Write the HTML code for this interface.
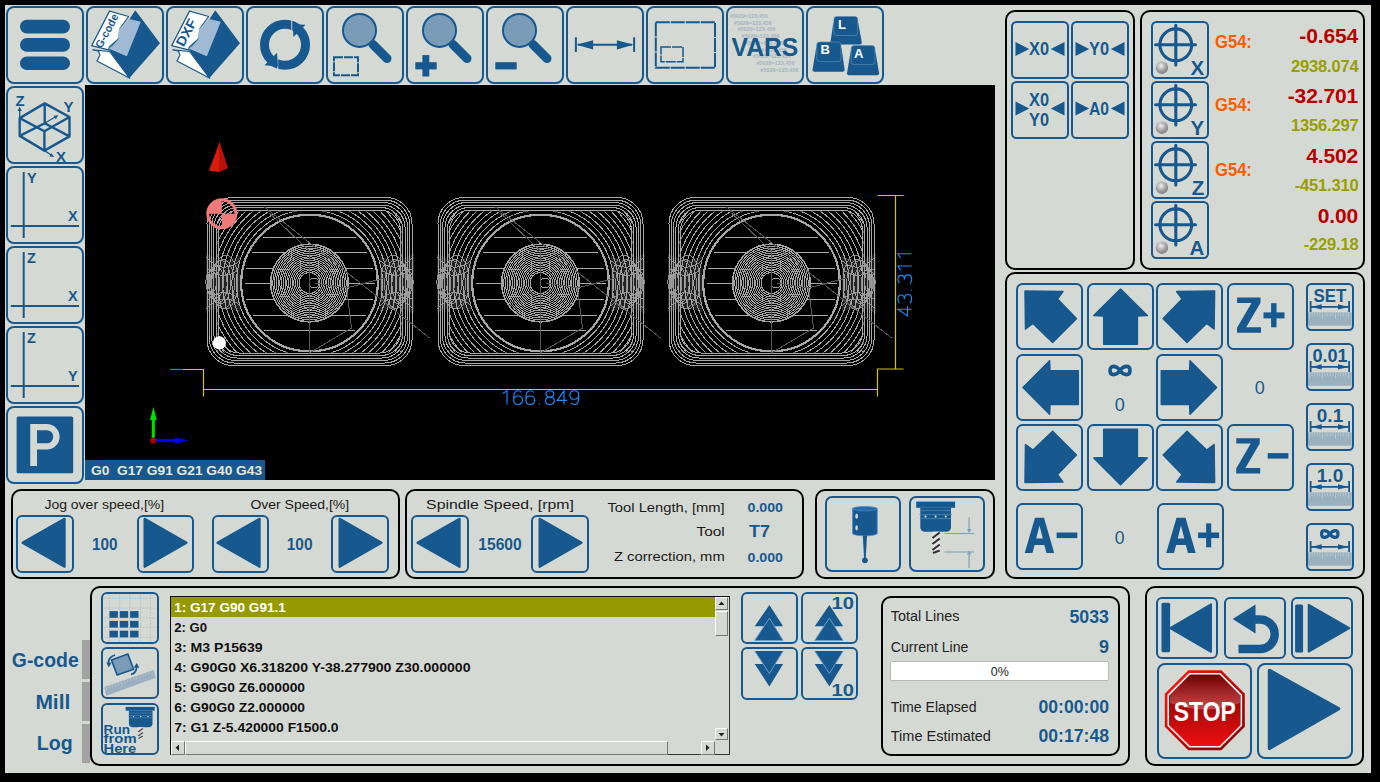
<!DOCTYPE html>
<html><head><meta charset="utf-8">
<style>
html,body{margin:0;padding:0;width:1380px;height:782px;overflow:hidden;background:#000}
body{position:relative;font-family:"Liberation Sans",sans-serif}
.b{position:absolute;box-sizing:border-box;border-style:solid;border-color:#17598e}
.p{position:absolute;box-sizing:border-box;border-style:solid;border-color:#000}
.t{position:absolute;white-space:nowrap;line-height:1}
svg{overflow:visible}
</style></head><body>
<div style="position:absolute;left:0;top:0;width:1380px;height:782px;background:#000"></div>
<div style="position:absolute;left:5px;top:5px;width:1366px;height:768px;background:#d5d9d3"></div>
<div class="b" style="left:6px;top:6px;width:77.6px;height:77.6px;border-radius:8px;border-width:2px;"></div>
<div class="b" style="left:86px;top:6px;width:77.6px;height:77.6px;border-radius:8px;border-width:2px;"></div>
<div class="b" style="left:166px;top:6px;width:77.6px;height:77.6px;border-radius:8px;border-width:2px;"></div>
<div class="b" style="left:246px;top:6px;width:77.6px;height:77.6px;border-radius:8px;border-width:2px;"></div>
<div class="b" style="left:326px;top:6px;width:77.6px;height:77.6px;border-radius:8px;border-width:2px;"></div>
<div class="b" style="left:406px;top:6px;width:77.6px;height:77.6px;border-radius:8px;border-width:2px;"></div>
<div class="b" style="left:486px;top:6px;width:77.6px;height:77.6px;border-radius:8px;border-width:2px;"></div>
<div class="b" style="left:566px;top:6px;width:77.6px;height:77.6px;border-radius:8px;border-width:2px;"></div>
<div class="b" style="left:646px;top:6px;width:77.6px;height:77.6px;border-radius:8px;border-width:2px;"></div>
<div class="b" style="left:726px;top:6px;width:77.6px;height:77.6px;border-radius:8px;border-width:2px;"></div>
<div class="b" style="left:806px;top:6px;width:77.6px;height:77.6px;border-radius:8px;border-width:2px;"></div>
<svg style="position:absolute;left:6px;top:6px;" width="78" height="78" viewBox="0 0 78 78"><rect x="14" y="13.8" width="50" height="13.7" rx="6.85" fill="#17598e"/><rect x="14" y="32.1" width="50" height="13.7" rx="6.85" fill="#17598e"/><rect x="14" y="50.4" width="50" height="13.7" rx="6.85" fill="#17598e"/></svg>
<svg style="position:absolute;left:86px;top:6px;" width="78" height="78" viewBox="0 0 78 78"><path d="M49.3,4.2 L74,37.2 L43.2,72.3 L23,44 Z" fill="#17598e"/><path d="M6.9,43.8 L12.3,45 L14,49 L11,55 L43.8,72.3 L23.5,45.5 Z" fill="#fff" stroke="#17598e" stroke-width="1.2" stroke-linejoin="round"/><path d="M5.7,39.6 L23.5,5.1 L42.6,10.5 L33.6,23 L33,32.5 L23.5,40.8 L22.4,43.8 Z" fill="#fff" stroke="#17598e" stroke-width="1.2" stroke-linejoin="round"/><path d="M43.2,12.9 L54.8,15.8 L40.8,50.3 L23.5,42.9 L32.5,33 L33,23 Z" fill="#9fbad2"/><text x="15.5" y="43" transform="rotate(-62 15.5 43)" font-family="Liberation Sans" font-weight="bold" font-size="11" fill="#17598e" textLength="37" lengthAdjust="spacingAndGlyphs">G-code</text></svg>
<svg style="position:absolute;left:166px;top:6px;" width="78" height="78" viewBox="0 0 78 78"><path d="M49.3,4.2 L74,37.2 L43.2,72.3 L23,44 Z" fill="#17598e"/><path d="M6.9,43.8 L12.3,45 L14,49 L11,55 L43.8,72.3 L23.5,45.5 Z" fill="#fff" stroke="#17598e" stroke-width="1.2" stroke-linejoin="round"/><path d="M5.7,39.6 L23.5,5.1 L42.6,10.5 L33.6,23 L33,32.5 L23.5,40.8 L22.4,43.8 Z" fill="#fff" stroke="#17598e" stroke-width="1.2" stroke-linejoin="round"/><path d="M43.2,12.9 L54.8,15.8 L40.8,50.3 L23.5,42.9 L32.5,33 L33,23 Z" fill="#9fbad2"/><text x="17.5" y="41.5" transform="rotate(-62 17.5 41.5)" font-family="Liberation Sans" font-weight="bold" font-size="13.5" fill="#17598e" textLength="29" lengthAdjust="spacingAndGlyphs">DXF</text></svg>
<svg style="position:absolute;left:246px;top:6px;" width="78" height="78" viewBox="0 0 78 78"><circle cx="39" cy="38.8" r="20.5" fill="none" stroke="#17598e" stroke-width="9"/><path d="M45.3,12 L46.3,12 L46.3,31 L45.3,31 Z M31.2,46 L32.2,46 L32.2,65 L31.2,65 Z" fill="#d5d9d3"/><path d="M46.5,18.3 L59.5,18.8 L47.5,31 Z" fill="#17598e"/><path d="M18.5,59.2 L31,46.8 L32,60.5 Z" fill="#17598e"/></svg>
<svg style="position:absolute;left:326px;top:6px;" width="78" height="78" viewBox="0 0 78 78"><line x1="47" y1="38.5" x2="61" y2="52.5" stroke="#17598e" stroke-width="9" stroke-linecap="round"/><circle cx="33.5" cy="24.4" r="16.5" fill="#7a9cb8" stroke="#17598e" stroke-width="2"/><rect x="8" y="51.2" width="24" height="18" fill="none" stroke="#17598e" stroke-width="2" stroke-dasharray="9 1"/></svg>
<svg style="position:absolute;left:406px;top:6px;" width="78" height="78" viewBox="0 0 78 78"><line x1="47" y1="38.5" x2="61" y2="52.5" stroke="#17598e" stroke-width="9" stroke-linecap="round"/><circle cx="33.5" cy="24.4" r="16.5" fill="#7a9cb8" stroke="#17598e" stroke-width="2"/><rect x="9.3" y="56.2" width="21.4" height="7.2" fill="#17598e"/><rect x="16.4" y="49.1" width="6.9" height="21.4" fill="#17598e"/></svg>
<svg style="position:absolute;left:486px;top:6px;" width="78" height="78" viewBox="0 0 78 78"><line x1="47" y1="38.5" x2="61" y2="52.5" stroke="#17598e" stroke-width="9" stroke-linecap="round"/><circle cx="33.5" cy="24.4" r="16.5" fill="#7a9cb8" stroke="#17598e" stroke-width="2"/><rect x="9.3" y="56.2" width="21.4" height="7.2" fill="#17598e"/></svg>
<svg style="position:absolute;left:566px;top:6px;" width="78" height="78" viewBox="0 0 78 78"><line x1="9.9" y1="31.3" x2="9.9" y2="46" stroke="#17598e" stroke-width="2"/><line x1="68.1" y1="31.3" x2="68.1" y2="46" stroke="#17598e" stroke-width="2"/><line x1="12" y1="38.8" x2="66" y2="38.8" stroke="#17598e" stroke-width="2"/><path d="M10.5,38.8 L27.1,34.2 L27.1,43.4 Z M67.5,38.8 L50.9,34.2 L50.9,43.4 Z" fill="#17598e"/></svg>
<svg style="position:absolute;left:646px;top:6px;" width="78" height="78" viewBox="0 0 78 78"><rect x="9.8" y="16.2" width="59.2" height="45.5" fill="none" stroke="#17598e" stroke-width="2" stroke-dasharray="14 1"/><rect x="15" y="41" width="22" height="14.7" fill="none" stroke="#17598e" stroke-width="1.5" stroke-dasharray="10 1"/></svg>
<svg style="position:absolute;left:726px;top:6px;" width="78" height="78" viewBox="0 0 78 78"><text x="3.9" y="11.90" font-family="Liberation Sans" font-weight="bold" font-size="5.2" fill="#a3b3c2" textLength="38" lengthAdjust="spacingAndGlyphs">#5029=123,456</text><text x="7.7" y="18.63" font-family="Liberation Sans" font-weight="bold" font-size="5.2" fill="#a3b3c2" textLength="38" lengthAdjust="spacingAndGlyphs">#5029=123,456</text><text x="11.5" y="25.36" font-family="Liberation Sans" font-weight="bold" font-size="5.2" fill="#a3b3c2" textLength="38" lengthAdjust="spacingAndGlyphs">#5029=123,456</text><text x="15.3" y="32.09" font-family="Liberation Sans" font-weight="bold" font-size="5.2" fill="#a3b3c2" textLength="38" lengthAdjust="spacingAndGlyphs">#5029=123,456</text><text x="19.1" y="38.82" font-family="Liberation Sans" font-weight="bold" font-size="5.2" fill="#a3b3c2" textLength="38" lengthAdjust="spacingAndGlyphs">#5029=123,456</text><text x="22.9" y="45.55" font-family="Liberation Sans" font-weight="bold" font-size="5.2" fill="#a3b3c2" textLength="38" lengthAdjust="spacingAndGlyphs">#5029=123,456</text><text x="26.7" y="52.28" font-family="Liberation Sans" font-weight="bold" font-size="5.2" fill="#a3b3c2" textLength="38" lengthAdjust="spacingAndGlyphs">#5029=123,456</text><text x="30.5" y="59.01" font-family="Liberation Sans" font-weight="bold" font-size="5.2" fill="#a3b3c2" textLength="38" lengthAdjust="spacingAndGlyphs">#5029=123,456</text><text x="34.3" y="65.74" font-family="Liberation Sans" font-weight="bold" font-size="5.2" fill="#a3b3c2" textLength="38" lengthAdjust="spacingAndGlyphs">#5029=123,456</text><text x="5.5" y="50.3" font-family="Liberation Sans" font-weight="bold" font-size="25" fill="#17598e" textLength="66.8" lengthAdjust="spacingAndGlyphs">VARS</text></svg>
<svg style="position:absolute;left:806px;top:6px;" width="78" height="78" viewBox="0 0 78 78"><path d="M24.4,36.4 L27.4,16.5 L52.2,16.5 L55.8,36.4 Q55.8,38.4 52.8,38.4 L27.4,38.4 Q24.4,38.4 24.4,36.4 Z" fill="#17598e"/><rect x="27.9" y="10.5" width="23.800000000000004" height="19.0" rx="3" fill="#17598e" stroke="#5f8ab0" stroke-width="0.7"/><text x="32" y="23" font-family="Liberation Sans" font-weight="bold" font-size="13" fill="#fff">L</text><path d="M6.5,63.7 L10.2,42 L35.5,42 L38.6,63.7 Q38.6,65.7 35.6,65.7 L9.5,65.7 Q6.5,65.7 6.5,63.7 Z" fill="#17598e"/><rect x="10.7" y="36" width="24.3" height="19.6" rx="3" fill="#17598e" stroke="#5f8ab0" stroke-width="0.7"/><text x="14.5" y="48" font-family="Liberation Sans" font-weight="bold" font-size="13" fill="#fff">B</text><path d="M41,67.3 L44.7,45.6 L69.4,45.6 L73.1,67.3 Q73.1,69.3 70.1,69.3 L44,69.3 Q41,69.3 41,67.3 Z" fill="#17598e"/><rect x="45.2" y="39.6" width="23.700000000000003" height="19.0" rx="3" fill="#17598e" stroke="#5f8ab0" stroke-width="0.7"/><text x="48" y="52" font-family="Liberation Sans" font-weight="bold" font-size="13" fill="#fff">A</text></svg>
<div class="b" style="left:6px;top:86.2px;width:77.6px;height:77.6px;border-radius:8px;border-width:2px;"></div>
<div class="b" style="left:6px;top:166.2px;width:77.6px;height:77.6px;border-radius:8px;border-width:2px;"></div>
<div class="b" style="left:6px;top:246.2px;width:77.6px;height:77.6px;border-radius:8px;border-width:2px;"></div>
<div class="b" style="left:6px;top:326.2px;width:77.6px;height:77.6px;border-radius:8px;border-width:2px;"></div>
<div class="b" style="left:6px;top:406.2px;width:77.6px;height:77.6px;border-radius:8px;border-width:2px;"></div>
<svg style="position:absolute;left:6px;top:86px;" width="78" height="78" viewBox="0 0 78 78"><path d="M13.7,32.1 L38.7,17.4 L63.5,31 L38.4,45.2 Z M13.7,49.9 L38.7,37.3 L63.5,50.4 L38.4,64.6 Z M13.7,32.1 V49.9 M38.7,17.4 V37.3 M63.5,31 V50.4 M38.4,45.2 V64.6" stroke="#17598e" stroke-width="2.4" fill="none" stroke-linejoin="round"/><path d="M13.7,32 V23" stroke="#17598e" stroke-width="1.3"/><path d="M13.7,20.5 L11.6,25 L15.8,25 Z" fill="#17598e"/><path d="M38.7,37.3 L50,30.5" stroke="#17598e" stroke-width="1.3"/><path d="M52.3,29.2 L47.6,29.8 L49.8,33.3 Z" fill="#17598e"/><path d="M38.4,64.6 L46,69.5" stroke="#17598e" stroke-width="1.3"/><path d="M48.3,71 L45.3,67.2 L43.4,70.6 Z" fill="#17598e"/><text x="9.5" y="20" font-family="Liberation Sans" font-weight="bold" font-size="15" fill="#17598e">Z</text><text x="57.5" y="25.8" font-family="Liberation Sans" font-weight="bold" font-size="15" fill="#17598e">Y</text><text x="50" y="75.6" font-family="Liberation Sans" font-weight="bold" font-size="15" fill="#17598e">X</text></svg>
<svg style="position:absolute;left:6px;top:166px;" width="78" height="78" viewBox="0 0 78 78"><path d="M17.7,5.9 V71.9 M4.8,59.9 H73" stroke="#17598e" stroke-width="2" fill="none"/><text x="21" y="16.9" font-family="Liberation Sans" font-weight="bold" font-size="14.5" fill="#17598e">Y</text><text x="62" y="55.1" font-family="Liberation Sans" font-weight="bold" font-size="14.5" fill="#17598e">X</text></svg>
<svg style="position:absolute;left:6px;top:246px;" width="78" height="78" viewBox="0 0 78 78"><path d="M17.7,5.9 V71.9 M4.8,59.9 H73" stroke="#17598e" stroke-width="2" fill="none"/><text x="21" y="16.9" font-family="Liberation Sans" font-weight="bold" font-size="14.5" fill="#17598e">Z</text><text x="62" y="55.1" font-family="Liberation Sans" font-weight="bold" font-size="14.5" fill="#17598e">X</text></svg>
<svg style="position:absolute;left:6px;top:326px;" width="78" height="78" viewBox="0 0 78 78"><path d="M17.7,5.9 V71.9 M4.8,59.9 H73" stroke="#17598e" stroke-width="2" fill="none"/><text x="21" y="16.9" font-family="Liberation Sans" font-weight="bold" font-size="14.5" fill="#17598e">Z</text><text x="62" y="55.1" font-family="Liberation Sans" font-weight="bold" font-size="14.5" fill="#17598e">Y</text></svg>
<svg style="position:absolute;left:6px;top:406px;" width="78" height="78" viewBox="0 0 78 78"><rect x="10.6" y="10.6" width="56.6" height="56.6" rx="1.5" fill="#17598e"/><path fill-rule="evenodd" d="M24.2,17.9 H40.75 A12.85,12.85 0 0 1 40.75,43.6 H31 V59.9 H24.2 Z M31,24.2 V37.3 H40.75 A6.55,6.55 0 0 0 40.75,24.2 Z" fill="#d5d9d3"/></svg>
<div style="position:absolute;left:85px;top:85px;width:910px;height:395px;background:#000"></div>
<svg style="position:absolute;left:0px;top:0px;pointer-events:none" width="1380" height="782" viewBox="0 0 1380 782"><defs><g id="prt" shape-rendering="crispEdges"><path d="M-76.5,-85.5 H76.5 A26,26 0 0 1 102.5,-59.5 V56.5 A26,26 0 0 1 76.5,82.5 H-76.5 A26,26 0 0 1 -102.5,56.5 V-59.5 A26,26 0 0 1 -76.5,-85.5 Z M-75.2,-83.0 H75.2 A25,25 0 0 1 100.2,-58.0 V55.0 A25,25 0 0 1 75.2,80.0 H-75.2 A25,25 0 0 1 -100.2,55.0 V-58.0 A25,25 0 0 1 -75.2,-83.0 Z M-73.9,-80.5 H73.9 A24,24 0 0 1 97.9,-56.5 V53.5 A24,24 0 0 1 73.9,77.5 H-73.9 A24,24 0 0 1 -97.9,53.5 V-56.5 A24,24 0 0 1 -73.9,-80.5 Z M-72.6,-78.0 H72.6 A23,23 0 0 1 95.6,-55.0 V52.0 A23,23 0 0 1 72.6,75.0 H-72.6 A23,23 0 0 1 -95.6,52.0 V-55.0 A23,23 0 0 1 -72.6,-78.0 Z M-71.3,-75.5 H71.3 A22,22 0 0 1 93.3,-53.5 V50.5 A22,22 0 0 1 71.3,72.5 H-71.3 A22,22 0 0 1 -93.3,50.5 V-53.5 A22,22 0 0 1 -71.3,-75.5 Z M-70,-73.0 H70 A21,21 0 0 1 91,-52.0 V49.0 A21,21 0 0 1 70,70.0 H-70 A21,21 0 0 1 -91,49.0 V-52.0 A21,21 0 0 1 -70,-73.0 Z" fill="none" stroke="#a8a8a8" stroke-width="1"/><clipPath id="arcclip"><rect x="-92" y="-71.5" width="184" height="141"/></clipPath><g clip-path="url(#arcclip)" fill="none" stroke="#a8a8a8" stroke-width="1"><circle cx="0" cy="0" r="73.0"/><circle cx="0" cy="0" r="77.6"/><circle cx="0" cy="0" r="82.2"/><circle cx="0" cy="0" r="86.8"/><circle cx="0" cy="0" r="91.4"/><circle cx="0" cy="0" r="96.0"/><circle cx="0" cy="0" r="100.6"/><circle cx="0" cy="0" r="105.2"/><circle cx="0" cy="0" r="109.8"/><circle cx="0" cy="0" r="114.4"/></g><g fill="none" stroke="#9c9c9c" stroke-width="0.9"><ellipse cx="-84.0" cy="-1" rx="12.5" ry="27.0"/><ellipse cx="-86.4" cy="1" rx="11.3" ry="24.4"/><ellipse cx="-88.8" cy="-1" rx="10.1" ry="21.8"/><ellipse cx="-91.2" cy="1" rx="8.9" ry="19.2"/><ellipse cx="-93.6" cy="-1" rx="7.7" ry="16.6"/><ellipse cx="-96.0" cy="1" rx="6.5" ry="14.0"/><ellipse cx="-98.4" cy="-1" rx="5.3" ry="11.4"/><path d="M-70,-22 Q-88,-8 -103,-26 M-70,22 Q-88,8 -103,26 M-72,-12 Q-88,-2 -102,-14 M-72,14 Q-88,4 -102,16" /><path d="M-104,-30 Q-88,-18 -70,-27 L-70,29 Q-88,20 -104,31 Z" fill="#9a9a9a" fill-opacity="0.22" stroke="none"/></g><g fill="none" stroke="#9c9c9c" stroke-width="0.9"><ellipse cx="84.0" cy="-1" rx="12.5" ry="27.0"/><ellipse cx="86.4" cy="1" rx="11.3" ry="24.4"/><ellipse cx="88.8" cy="-1" rx="10.1" ry="21.8"/><ellipse cx="91.2" cy="1" rx="8.9" ry="19.2"/><ellipse cx="93.6" cy="-1" rx="7.7" ry="16.6"/><ellipse cx="96.0" cy="1" rx="6.5" ry="14.0"/><ellipse cx="98.4" cy="-1" rx="5.3" ry="11.4"/><path d="M70,-22 Q88,-8 103,-26 M70,22 Q88,8 103,26 M72,-12 Q88,-2 102,-14 M72,14 Q88,4 102,16" /><path d="M104,-30 Q88,-18 70,-27 L70,29 Q88,20 104,31 Z" fill="#9a9a9a" fill-opacity="0.22" stroke="none"/></g><circle cx="0" cy="0" r="68.3" fill="#000" stroke="#a8a8a8" stroke-width="2.2"/><line x1="-46.7" y1="-45.5" x2="46.7" y2="-45.5" stroke="#a8a8a8" stroke-width="1"/><line x1="-57.4" y1="-30.5" x2="57.4" y2="-30.5" stroke="#a8a8a8" stroke-width="1"/><line x1="-63.3" y1="-14.5" x2="63.3" y2="-14.5" stroke="#a8a8a8" stroke-width="1"/><line x1="-65.0" y1="0.5" x2="65.0" y2="0.5" stroke="#a8a8a8" stroke-width="1"/><line x1="-63.1" y1="16.5" x2="63.1" y2="16.5" stroke="#a8a8a8" stroke-width="1"/><line x1="-56.9" y1="32.5" x2="56.9" y2="32.5" stroke="#a8a8a8" stroke-width="1"/><line x1="-45.7" y1="47.5" x2="45.7" y2="47.5" stroke="#a8a8a8" stroke-width="1"/><circle cx="0" cy="0" r="38.8" fill="#000"/><g fill="none" stroke="#a4a4a4" stroke-width="1"><circle cx="0" cy="0" r="10.50"/><circle cx="0" cy="0" r="12.25"/><circle cx="0" cy="0" r="14.00"/><circle cx="0" cy="0" r="15.75"/><circle cx="0" cy="0" r="17.50"/><circle cx="0" cy="0" r="19.25"/><circle cx="0" cy="0" r="21.00"/><circle cx="0" cy="0" r="22.75"/><circle cx="0" cy="0" r="24.50"/><circle cx="0" cy="0" r="26.25"/><circle cx="0" cy="0" r="28.00"/><circle cx="0" cy="0" r="29.75"/><circle cx="0" cy="0" r="31.50"/><circle cx="0" cy="0" r="33.25"/><circle cx="0" cy="0" r="35.00"/><circle cx="0" cy="0" r="36.75"/><circle cx="0" cy="0" r="38.50"/><circle cx="0" cy="0" r="38.8" stroke-width="1.6"/></g><circle cx="0" cy="0" r="9.5" fill="#000"/><circle cx="4.5" cy="0" r="5" fill="none" stroke="#a0a0a0" stroke-width="1"/><path d="M-40,-70 L0,-32 M-45,-76 L120,55 M0,-32 V70 L42,45 L37,5 L5,0 M37,5 L75,-5" fill="none" stroke="#5a5a5a" stroke-width="1"/></g></defs><use href="#prt" transform="translate(309.5 283)"/><use href="#prt" transform="translate(540.5 283)"/><use href="#prt" transform="translate(771.5 283)"/><path d="M170,369.5 H183" stroke="#2a7be0" stroke-width="1.2"/><path d="M183,369.5 H203.5 V396.5 M203.5,389.5 H877.5 M877.5,396.5 V369 H903.5 M895.5,369 V195.5 M877.5,195.5 H903.5" fill="none" stroke="#d4c800" stroke-width="1.2"/><g transform="translate(501 390.8)" fill="none" stroke="#1a8cff" stroke-width="1.15"><path transform="translate(0.0 0)" d="M1.8,2.6 L6,0 V13.7"/><path transform="translate(12.2 0)" d="M8.3,1.6 Q7,0 4.7,0 Q0.5,0 0.5,6.8 V9.2 Q0.5,13.7 4.9,13.7 Q9.3,13.7 9.3,9.3 Q9.3,5.2 4.9,5.2 Q0.5,5.2 0.5,9.2"/><path transform="translate(24.4 0)" d="M8.3,1.6 Q7,0 4.7,0 Q0.5,0 0.5,6.8 V9.2 Q0.5,13.7 4.9,13.7 Q9.3,13.7 9.3,9.3 Q9.3,5.2 4.9,5.2 Q0.5,5.2 0.5,9.2"/><path transform="translate(36.6 0)" d="M1.6,12.6 V13.9"/><path transform="translate(44.0 0)" d="M4.9,0 Q1,0 1,3.2 Q1,6.3 4.9,6.3 Q8.8,6.3 8.8,3.2 Q8.8,0 4.9,0 Z M4.9,6.3 Q0.5,6.3 0.5,10 Q0.5,13.7 4.9,13.7 Q9.3,13.7 9.3,10 Q9.3,6.3 4.9,6.3 Z"/><path transform="translate(56.2 0)" d="M6.8,13.7 V0 L0,9.6 H10"/><path transform="translate(68.4 0)" d="M1.5,12.1 Q2.8,13.7 5.1,13.7 Q9.3,13.7 9.3,6.9 V4.5 Q9.3,0 4.9,0 Q0.5,0 0.5,4.4 Q0.5,8.5 4.9,8.5 Q9.3,8.5 9.3,4.5"/></g><g transform="translate(897.9 316) rotate(-90)" fill="none" stroke="#1a8cff" stroke-width="1.15"><path transform="translate(0.0 0)" d="M6.8,13.7 V0 L0,9.6 H10"/><path transform="translate(12.2 0)" d="M0.8,1.6 Q2.2,0 4.7,0 Q8.8,0 8.8,3.4 Q8.8,6.5 4.6,6.5 Q9.3,6.5 9.3,10.1 Q9.3,13.7 4.8,13.7 Q1.9,13.7 0.5,12"/><path transform="translate(24.4 0)" d="M1.6,12.6 V13.9"/><path transform="translate(31.8 0)" d="M0.8,1.6 Q2.2,0 4.7,0 Q8.8,0 8.8,3.4 Q8.8,6.5 4.6,6.5 Q9.3,6.5 9.3,10.1 Q9.3,13.7 4.8,13.7 Q1.9,13.7 0.5,12"/><path transform="translate(44.0 0)" d="M1.8,2.6 L6,0 V13.7"/><path transform="translate(56.2 0)" d="M1.8,2.6 L6,0 V13.7"/></g><path d="M219.5,142 L209,170.8 L218.8,172 L227.7,168 Z" fill="#d81a0a"/><path d="M219.5,142 L218.8,172 L227.7,168 Z" fill="#b81208"/><circle cx="221.8" cy="213.7" r="14" fill="none" stroke="#f07a7a" stroke-width="3"/><path d="M221.8,213.7 V199.7 A14,14 0 0 0 207.8,213.7 Z M221.8,213.7 V227.7 A14,14 0 0 0 235.8,213.7 Z" fill="#f07a7a"/><circle cx="219.4" cy="342.8" r="6.6" fill="#fff"/><path d="M153.3,440.6 V418" stroke="#00e000" stroke-width="3"/><path d="M153.4,407 L150,420 L156.8,420 Z" fill="#00e000"/><path d="M153.3,440.6 H176" stroke="#0000f0" stroke-width="3"/><path d="M188,440.6 L175,437.3 L175,443.9 Z" fill="#0000f0"/><circle cx="153.2" cy="440.6" r="3.2" fill="#a00000"/></svg>
<div style="position:absolute;left:85px;top:460px;width:180px;height:19.5px;background:#17598e"></div>
<div class="p" style="left:1005px;top:10px;width:130px;height:260px;border-radius:10px;border-width:2px"></div>
<div class="p" style="left:1140px;top:10px;width:225px;height:260px;border-radius:10px;border-width:2px"></div>
<div class="b" style="left:1011px;top:21px;width:58px;height:58px;border-radius:5.5px;border-width:2px;"></div>
<div class="b" style="left:1071px;top:21px;width:58px;height:58px;border-radius:5.5px;border-width:2px;"></div>
<div class="b" style="left:1011px;top:81px;width:58px;height:58px;border-radius:5.5px;border-width:2px;"></div>
<div class="b" style="left:1071px;top:81px;width:58px;height:58px;border-radius:5.5px;border-width:2px;"></div>
<div class="b" style="left:1151.1px;top:21.1px;width:57.9px;height:57.6px;border-radius:5.5px;border-width:2px;"></div>
<div class="b" style="left:1151.1px;top:81.1px;width:57.9px;height:57.6px;border-radius:5.5px;border-width:2px;"></div>
<div class="b" style="left:1151.1px;top:141.1px;width:57.9px;height:57.6px;border-radius:5.5px;border-width:2px;"></div>
<div class="b" style="left:1151.1px;top:201.1px;width:57.9px;height:57.6px;border-radius:5.5px;border-width:2px;"></div>
<svg style="position:absolute;left:1011.4px;top:21.5px;" width="57" height="57" viewBox="0 0 57 57"><path d="M4.5,20 L18.2,27 L4.5,34 Z M53.5,20 L39.8,27 L53.5,34 Z" fill="#17598e"/><text x="28" y="33.1" text-anchor="middle" font-family="Liberation Sans" font-weight="bold" font-size="18" fill="#17598e" textLength="20" lengthAdjust="spacingAndGlyphs">X0</text></svg>
<svg style="position:absolute;left:1071.4px;top:21.5px;" width="57" height="57" viewBox="0 0 57 57"><path d="M4.5,20 L18.2,27 L4.5,34 Z M53.5,20 L39.8,27 L53.5,34 Z" fill="#17598e"/><text x="28" y="33.1" text-anchor="middle" font-family="Liberation Sans" font-weight="bold" font-size="18" fill="#17598e" textLength="20" lengthAdjust="spacingAndGlyphs">Y0</text></svg>
<svg style="position:absolute;left:1011.4px;top:81.8px;" width="57" height="57" viewBox="0 0 57 57"><path d="M4.5,19.5 L18.2,26.5 L4.5,33.5 Z M53.5,19.5 L39.8,26.5 L53.5,33.5 Z" fill="#17598e"/><text x="28" y="24.2" text-anchor="middle" font-family="Liberation Sans" font-weight="bold" font-size="18" fill="#17598e" textLength="20" lengthAdjust="spacingAndGlyphs">X0</text><text x="28" y="43.5" text-anchor="middle" font-family="Liberation Sans" font-weight="bold" font-size="18" fill="#17598e" textLength="20" lengthAdjust="spacingAndGlyphs">Y0</text></svg>
<svg style="position:absolute;left:1071.4px;top:81.8px;" width="57" height="57" viewBox="0 0 57 57"><path d="M4.5,19.5 L18.2,26.5 L4.5,33.5 Z M53.5,19.5 L39.8,26.5 L53.5,33.5 Z" fill="#17598e"/><text x="28" y="33.1" text-anchor="middle" font-family="Liberation Sans" font-weight="bold" font-size="18" fill="#17598e" textLength="20" lengthAdjust="spacingAndGlyphs">A0</text></svg>
<svg style="position:absolute;left:0px;top:0px;" width="1" height="1" viewBox="0 0 1 1"><defs><radialGradient id="led" cx="0.42" cy="0.35" r="0.75"><stop offset="0" stop-color="#f0f0f0"/><stop offset="0.55" stop-color="#a0a0a0"/><stop offset="1" stop-color="#707070"/></radialGradient></defs></svg>
<svg style="position:absolute;left:1151.1px;top:21.1px;" width="58" height="58" viewBox="0 0 58 58"><circle cx="24.8" cy="23.8" r="15.9" fill="none" stroke="#17598e" stroke-width="3.1"/><path d="M4.6,23.8 H44.5 M24.8,4.2 V44" stroke="#17598e" stroke-width="3.1" stroke-linecap="round"/><text x="53.2" y="54" text-anchor="end" font-family="Liberation Sans" font-weight="bold" font-size="20.5" fill="#17598e">X</text><circle cx="10.9" cy="46.7" r="6.2" fill="url(#led)"/></svg>
<svg style="position:absolute;left:1151.1px;top:81.1px;" width="58" height="58" viewBox="0 0 58 58"><circle cx="24.8" cy="23.8" r="15.9" fill="none" stroke="#17598e" stroke-width="3.1"/><path d="M4.6,23.8 H44.5 M24.8,4.2 V44" stroke="#17598e" stroke-width="3.1" stroke-linecap="round"/><text x="53.2" y="54" text-anchor="end" font-family="Liberation Sans" font-weight="bold" font-size="20.5" fill="#17598e">Y</text><circle cx="10.9" cy="46.7" r="6.2" fill="url(#led)"/></svg>
<svg style="position:absolute;left:1151.1px;top:141.1px;" width="58" height="58" viewBox="0 0 58 58"><circle cx="24.8" cy="23.8" r="15.9" fill="none" stroke="#17598e" stroke-width="3.1"/><path d="M4.6,23.8 H44.5 M24.8,4.2 V44" stroke="#17598e" stroke-width="3.1" stroke-linecap="round"/><text x="53.2" y="54" text-anchor="end" font-family="Liberation Sans" font-weight="bold" font-size="20.5" fill="#17598e">Z</text><circle cx="10.9" cy="46.7" r="6.2" fill="url(#led)"/></svg>
<svg style="position:absolute;left:1151.1px;top:201.1px;" width="58" height="58" viewBox="0 0 58 58"><circle cx="24.8" cy="23.8" r="15.9" fill="none" stroke="#17598e" stroke-width="3.1"/><path d="M4.6,23.8 H44.5 M24.8,4.2 V44" stroke="#17598e" stroke-width="3.1" stroke-linecap="round"/><text x="53.2" y="54" text-anchor="end" font-family="Liberation Sans" font-weight="bold" font-size="20.5" fill="#17598e">A</text><circle cx="10.9" cy="46.7" r="6.2" fill="url(#led)"/></svg>
<div class="p" style="left:1005px;top:272px;width:360px;height:307px;border-radius:10px;border-width:2px"></div>
<div class="b" style="left:1016.3px;top:283.3px;width:67.2px;height:67px;border-radius:6.5px;border-width:2px;"></div>
<div class="b" style="left:1086.6px;top:283.3px;width:67.2px;height:67px;border-radius:6.5px;border-width:2px;"></div>
<div class="b" style="left:1156.3px;top:283.3px;width:67.2px;height:67px;border-radius:6.5px;border-width:2px;"></div>
<div class="b" style="left:1226.5px;top:283.3px;width:67.2px;height:67px;border-radius:6.5px;border-width:2px;"></div>
<div class="b" style="left:1016.3px;top:353.8px;width:67.2px;height:67px;border-radius:6.5px;border-width:2px;"></div>
<div class="b" style="left:1156.3px;top:353.8px;width:67.2px;height:67px;border-radius:6.5px;border-width:2px;"></div>
<div class="b" style="left:1016.3px;top:423.9px;width:67.2px;height:67px;border-radius:6.5px;border-width:2px;"></div>
<div class="b" style="left:1086.6px;top:423.9px;width:67.2px;height:67px;border-radius:6.5px;border-width:2px;"></div>
<div class="b" style="left:1156.3px;top:423.9px;width:67.2px;height:67px;border-radius:6.5px;border-width:2px;"></div>
<div class="b" style="left:1226.5px;top:423.9px;width:67.2px;height:67px;border-radius:6.5px;border-width:2px;"></div>
<div class="b" style="left:1016.4px;top:503.3px;width:67px;height:66.6px;border-radius:6.5px;border-width:2px;"></div>
<div class="b" style="left:1156.7px;top:503.3px;width:67px;height:66.6px;border-radius:6.5px;border-width:2px;"></div>
<div class="b" style="left:1306.2px;top:283px;width:47.7px;height:47.7px;border-radius:5.5px;border-width:2px;"></div>
<div class="b" style="left:1306.2px;top:343px;width:47.7px;height:47.7px;border-radius:5.5px;border-width:2px;"></div>
<div class="b" style="left:1306.2px;top:403px;width:47.7px;height:47.7px;border-radius:5.5px;border-width:2px;"></div>
<div class="b" style="left:1306.2px;top:463px;width:47.7px;height:47.7px;border-radius:5.5px;border-width:2px;"></div>
<div class="b" style="left:1306.2px;top:523px;width:47.7px;height:47.7px;border-radius:5.5px;border-width:2px;"></div>
<svg style="position:absolute;left:1016.5px;top:283.3px;" width="67" height="67" viewBox="0 0 67 67"><polygon points="8.00,8.00 46.00,8.50 40.50,16.00 59.40,35.60 35.60,59.40 16.00,40.50 8.50,46.00" fill="#17598e" stroke="#17598e" stroke-width="1.5" stroke-linejoin="round"/></svg>
<svg style="position:absolute;left:1086.6px;top:283.3px;" width="67" height="67" viewBox="0 0 67 67"><polygon points="33.50,6.00 60.30,32.60 50.40,33.00 50.40,61.30 16.70,61.30 16.70,33.00 6.80,32.60" fill="#17598e" stroke="#17598e" stroke-width="1.5" stroke-linejoin="round"/></svg>
<svg style="position:absolute;left:1156.4px;top:283.3px;" width="67" height="67" viewBox="0 0 67 67"><polygon points="58.60,8.00 20.60,8.50 26.10,16.00 7.20,35.60 31.00,59.40 50.60,40.50 58.10,46.00" fill="#17598e" stroke="#17598e" stroke-width="1.5" stroke-linejoin="round"/></svg>
<svg style="position:absolute;left:1016.5px;top:353.8px;" width="67" height="67" viewBox="0 0 67 67"><polygon points="6.00,33.50 32.60,60.30 33.00,50.40 61.30,50.40 61.30,16.70 33.00,16.70 32.60,6.80" fill="#17598e" stroke="#17598e" stroke-width="1.5" stroke-linejoin="round"/></svg>
<svg style="position:absolute;left:1156.4px;top:353.8px;" width="67" height="67" viewBox="0 0 67 67"><polygon points="60.60,33.50 34.00,60.30 33.60,50.40 5.30,50.40 5.30,16.70 33.60,16.70 34.00,6.80" fill="#17598e" stroke="#17598e" stroke-width="1.5" stroke-linejoin="round"/></svg>
<svg style="position:absolute;left:1016.5px;top:423.9px;" width="67" height="67" viewBox="0 0 67 67"><polygon points="8.00,58.60 46.00,58.10 40.50,50.60 59.40,31.00 35.60,7.20 16.00,26.10 8.50,20.60" fill="#17598e" stroke="#17598e" stroke-width="1.5" stroke-linejoin="round"/></svg>
<svg style="position:absolute;left:1086.6px;top:423.9px;" width="67" height="67" viewBox="0 0 67 67"><polygon points="33.50,60.60 60.30,34.00 50.40,33.60 50.40,5.30 16.70,5.30 16.70,33.60 6.80,34.00" fill="#17598e" stroke="#17598e" stroke-width="1.5" stroke-linejoin="round"/></svg>
<svg style="position:absolute;left:1156.4px;top:423.9px;" width="67" height="67" viewBox="0 0 67 67"><polygon points="58.60,58.60 20.60,58.10 26.10,50.60 7.20,31.00 31.00,7.20 50.60,26.10 58.10,20.60" fill="#17598e" stroke="#17598e" stroke-width="1.5" stroke-linejoin="round"/></svg>
<svg style="position:absolute;left:1226.5px;top:283.3px;" width="67" height="67" viewBox="0 0 67 67"><polygon points="10.10,14.50 33.50,14.50 33.50,19.80 19.20,44.30 34.00,44.30 34.00,49.80 10.00,49.80 10.00,44.80 24.50,19.90 10.10,19.90" fill="#17598e"/><rect x="36.5" y="29.4" width="21" height="6" fill="#17598e"/><rect x="44.1" y="20.2" width="5.4" height="24.1" fill="#17598e"/></svg>
<svg style="position:absolute;left:1226.5px;top:423.9px;" width="67" height="67" viewBox="0 0 67 67"><polygon points="9.30,14.20 32.70,14.20 32.70,19.50 18.40,44.00 33.20,44.00 33.20,49.50 9.20,49.50 9.20,44.50 23.70,19.60 9.30,19.60" fill="#17598e"/><rect x="40.7" y="29.1" width="20.7" height="5.5" fill="#17598e"/></svg>
<svg style="position:absolute;left:1016.4px;top:503.3px;" width="67" height="67" viewBox="0 0 67 67"><path fill-rule="evenodd" d="M8.7,49.9 L19,14.8 L28,14.8 L38.2,49.9 L30.4,49.9 L28.3,42 L18.6,42 L16.5,49.9 Z M20.2,35.5 L26.8,35.5 L23.5,22.5 Z" fill="#17598e"/><rect x="40.6" y="29.5" width="20.7" height="5.6" fill="#17598e"/></svg>
<svg style="position:absolute;left:1156.7px;top:503.3px;" width="67" height="67" viewBox="0 0 67 67"><g transform="translate(0.5 0)"><path fill-rule="evenodd" d="M8.7,49.9 L19,14.8 L28,14.8 L38.2,49.9 L30.4,49.9 L28.3,42 L18.6,42 L16.5,49.9 Z M20.2,35.5 L26.8,35.5 L23.5,22.5 Z" fill="#17598e"/></g><rect x="41.1" y="29.5" width="21" height="5.6" fill="#17598e"/><rect x="49.1" y="20.4" width="5.1" height="23.9" fill="#17598e"/></svg>
<svg style="position:absolute;left:1106px;top:362px;" width="28" height="18" viewBox="0 0 28 18"><path d="M14,8.5 C10,3 4,3 4,8.5 C4,14 10,14 14,8.5 C18,3 24,3 24,8.5 C24,14 18,14 14,8.5 Z" fill="none" stroke="#17598e" stroke-width="3.6"/></svg>
<svg style="position:absolute;left:1306.2px;top:283px;" width="48" height="48" viewBox="0 0 48 48"><path d="M4.6,18.1 V29 M43.1,18.1 V29 M5,23.9 H42.6" stroke="#17598e" stroke-width="1.8"/><path d="M5.1,23.9 L15.7,21.2 L15.7,26.6 Z M42.6,23.9 L32,21.2 L32,26.6 Z" fill="#17598e"/><rect x="2" y="29.3" width="43.7" height="13.4" fill="#9ab0bf"/><path d="M3.5,29.3 V35.5" stroke="#c2cfd8" stroke-width="0.7"/><path d="M6.1,29.3 V33.5" stroke="#c2cfd8" stroke-width="0.7"/><path d="M8.7,29.3 V33.5" stroke="#c2cfd8" stroke-width="0.7"/><path d="M11.3,29.3 V33.5" stroke="#c2cfd8" stroke-width="0.7"/><path d="M13.9,29.3 V33.5" stroke="#c2cfd8" stroke-width="0.7"/><path d="M16.5,29.3 V35.5" stroke="#c2cfd8" stroke-width="0.7"/><path d="M19.1,29.3 V33.5" stroke="#c2cfd8" stroke-width="0.7"/><path d="M21.7,29.3 V33.5" stroke="#c2cfd8" stroke-width="0.7"/><path d="M24.3,29.3 V33.5" stroke="#c2cfd8" stroke-width="0.7"/><path d="M26.9,29.3 V33.5" stroke="#c2cfd8" stroke-width="0.7"/><path d="M29.5,29.3 V35.5" stroke="#c2cfd8" stroke-width="0.7"/><path d="M32.1,29.3 V33.5" stroke="#c2cfd8" stroke-width="0.7"/><path d="M34.7,29.3 V33.5" stroke="#c2cfd8" stroke-width="0.7"/><path d="M37.3,29.3 V33.5" stroke="#c2cfd8" stroke-width="0.7"/><path d="M39.9,29.3 V33.5" stroke="#c2cfd8" stroke-width="0.7"/><path d="M42.5,29.3 V35.5" stroke="#c2cfd8" stroke-width="0.7"/><text x="24" y="18.5" text-anchor="middle" font-family="Liberation Sans" font-weight="bold" font-size="19" fill="#17598e" textLength="32.8" lengthAdjust="spacingAndGlyphs">SET</text></svg>
<svg style="position:absolute;left:1306.2px;top:343px;" width="48" height="48" viewBox="0 0 48 48"><path d="M4.6,18.1 V29 M43.1,18.1 V29 M5,23.9 H42.6" stroke="#17598e" stroke-width="1.8"/><path d="M5.1,23.9 L15.7,21.2 L15.7,26.6 Z M42.6,23.9 L32,21.2 L32,26.6 Z" fill="#17598e"/><rect x="2" y="29.3" width="43.7" height="13.4" fill="#9ab0bf"/><path d="M3.5,29.3 V35.5" stroke="#c2cfd8" stroke-width="0.7"/><path d="M6.1,29.3 V33.5" stroke="#c2cfd8" stroke-width="0.7"/><path d="M8.7,29.3 V33.5" stroke="#c2cfd8" stroke-width="0.7"/><path d="M11.3,29.3 V33.5" stroke="#c2cfd8" stroke-width="0.7"/><path d="M13.9,29.3 V33.5" stroke="#c2cfd8" stroke-width="0.7"/><path d="M16.5,29.3 V35.5" stroke="#c2cfd8" stroke-width="0.7"/><path d="M19.1,29.3 V33.5" stroke="#c2cfd8" stroke-width="0.7"/><path d="M21.7,29.3 V33.5" stroke="#c2cfd8" stroke-width="0.7"/><path d="M24.3,29.3 V33.5" stroke="#c2cfd8" stroke-width="0.7"/><path d="M26.9,29.3 V33.5" stroke="#c2cfd8" stroke-width="0.7"/><path d="M29.5,29.3 V35.5" stroke="#c2cfd8" stroke-width="0.7"/><path d="M32.1,29.3 V33.5" stroke="#c2cfd8" stroke-width="0.7"/><path d="M34.7,29.3 V33.5" stroke="#c2cfd8" stroke-width="0.7"/><path d="M37.3,29.3 V33.5" stroke="#c2cfd8" stroke-width="0.7"/><path d="M39.9,29.3 V33.5" stroke="#c2cfd8" stroke-width="0.7"/><path d="M42.5,29.3 V35.5" stroke="#c2cfd8" stroke-width="0.7"/><text x="24" y="18.5" text-anchor="middle" font-family="Liberation Sans" font-weight="bold" font-size="19" fill="#17598e" textLength="35.2" lengthAdjust="spacingAndGlyphs">0.01</text></svg>
<svg style="position:absolute;left:1306.2px;top:403px;" width="48" height="48" viewBox="0 0 48 48"><path d="M4.6,18.1 V29 M43.1,18.1 V29 M5,23.9 H42.6" stroke="#17598e" stroke-width="1.8"/><path d="M5.1,23.9 L15.7,21.2 L15.7,26.6 Z M42.6,23.9 L32,21.2 L32,26.6 Z" fill="#17598e"/><rect x="2" y="29.3" width="43.7" height="13.4" fill="#9ab0bf"/><path d="M3.5,29.3 V35.5" stroke="#c2cfd8" stroke-width="0.7"/><path d="M6.1,29.3 V33.5" stroke="#c2cfd8" stroke-width="0.7"/><path d="M8.7,29.3 V33.5" stroke="#c2cfd8" stroke-width="0.7"/><path d="M11.3,29.3 V33.5" stroke="#c2cfd8" stroke-width="0.7"/><path d="M13.9,29.3 V33.5" stroke="#c2cfd8" stroke-width="0.7"/><path d="M16.5,29.3 V35.5" stroke="#c2cfd8" stroke-width="0.7"/><path d="M19.1,29.3 V33.5" stroke="#c2cfd8" stroke-width="0.7"/><path d="M21.7,29.3 V33.5" stroke="#c2cfd8" stroke-width="0.7"/><path d="M24.3,29.3 V33.5" stroke="#c2cfd8" stroke-width="0.7"/><path d="M26.9,29.3 V33.5" stroke="#c2cfd8" stroke-width="0.7"/><path d="M29.5,29.3 V35.5" stroke="#c2cfd8" stroke-width="0.7"/><path d="M32.1,29.3 V33.5" stroke="#c2cfd8" stroke-width="0.7"/><path d="M34.7,29.3 V33.5" stroke="#c2cfd8" stroke-width="0.7"/><path d="M37.3,29.3 V33.5" stroke="#c2cfd8" stroke-width="0.7"/><path d="M39.9,29.3 V33.5" stroke="#c2cfd8" stroke-width="0.7"/><path d="M42.5,29.3 V35.5" stroke="#c2cfd8" stroke-width="0.7"/><text x="24" y="18.5" text-anchor="middle" font-family="Liberation Sans" font-weight="bold" font-size="19" fill="#17598e" textLength="26.400000000000002" lengthAdjust="spacingAndGlyphs">0.1</text></svg>
<svg style="position:absolute;left:1306.2px;top:463px;" width="48" height="48" viewBox="0 0 48 48"><path d="M4.6,18.1 V29 M43.1,18.1 V29 M5,23.9 H42.6" stroke="#17598e" stroke-width="1.8"/><path d="M5.1,23.9 L15.7,21.2 L15.7,26.6 Z M42.6,23.9 L32,21.2 L32,26.6 Z" fill="#17598e"/><rect x="2" y="29.3" width="43.7" height="13.4" fill="#9ab0bf"/><path d="M3.5,29.3 V35.5" stroke="#c2cfd8" stroke-width="0.7"/><path d="M6.1,29.3 V33.5" stroke="#c2cfd8" stroke-width="0.7"/><path d="M8.7,29.3 V33.5" stroke="#c2cfd8" stroke-width="0.7"/><path d="M11.3,29.3 V33.5" stroke="#c2cfd8" stroke-width="0.7"/><path d="M13.9,29.3 V33.5" stroke="#c2cfd8" stroke-width="0.7"/><path d="M16.5,29.3 V35.5" stroke="#c2cfd8" stroke-width="0.7"/><path d="M19.1,29.3 V33.5" stroke="#c2cfd8" stroke-width="0.7"/><path d="M21.7,29.3 V33.5" stroke="#c2cfd8" stroke-width="0.7"/><path d="M24.3,29.3 V33.5" stroke="#c2cfd8" stroke-width="0.7"/><path d="M26.9,29.3 V33.5" stroke="#c2cfd8" stroke-width="0.7"/><path d="M29.5,29.3 V35.5" stroke="#c2cfd8" stroke-width="0.7"/><path d="M32.1,29.3 V33.5" stroke="#c2cfd8" stroke-width="0.7"/><path d="M34.7,29.3 V33.5" stroke="#c2cfd8" stroke-width="0.7"/><path d="M37.3,29.3 V33.5" stroke="#c2cfd8" stroke-width="0.7"/><path d="M39.9,29.3 V33.5" stroke="#c2cfd8" stroke-width="0.7"/><path d="M42.5,29.3 V35.5" stroke="#c2cfd8" stroke-width="0.7"/><text x="24" y="18.5" text-anchor="middle" font-family="Liberation Sans" font-weight="bold" font-size="19" fill="#17598e" textLength="26.400000000000002" lengthAdjust="spacingAndGlyphs">1.0</text></svg>
<svg style="position:absolute;left:1306.2px;top:523px;" width="48" height="48" viewBox="0 0 48 48"><path d="M4.6,18.1 V29 M43.1,18.1 V29 M5,23.9 H42.6" stroke="#17598e" stroke-width="1.8"/><path d="M5.1,23.9 L15.7,21.2 L15.7,26.6 Z M42.6,23.9 L32,21.2 L32,26.6 Z" fill="#17598e"/><rect x="2" y="29.3" width="43.7" height="13.4" fill="#9ab0bf"/><path d="M3.5,29.3 V35.5" stroke="#c2cfd8" stroke-width="0.7"/><path d="M6.1,29.3 V33.5" stroke="#c2cfd8" stroke-width="0.7"/><path d="M8.7,29.3 V33.5" stroke="#c2cfd8" stroke-width="0.7"/><path d="M11.3,29.3 V33.5" stroke="#c2cfd8" stroke-width="0.7"/><path d="M13.9,29.3 V33.5" stroke="#c2cfd8" stroke-width="0.7"/><path d="M16.5,29.3 V35.5" stroke="#c2cfd8" stroke-width="0.7"/><path d="M19.1,29.3 V33.5" stroke="#c2cfd8" stroke-width="0.7"/><path d="M21.7,29.3 V33.5" stroke="#c2cfd8" stroke-width="0.7"/><path d="M24.3,29.3 V33.5" stroke="#c2cfd8" stroke-width="0.7"/><path d="M26.9,29.3 V33.5" stroke="#c2cfd8" stroke-width="0.7"/><path d="M29.5,29.3 V35.5" stroke="#c2cfd8" stroke-width="0.7"/><path d="M32.1,29.3 V33.5" stroke="#c2cfd8" stroke-width="0.7"/><path d="M34.7,29.3 V33.5" stroke="#c2cfd8" stroke-width="0.7"/><path d="M37.3,29.3 V33.5" stroke="#c2cfd8" stroke-width="0.7"/><path d="M39.9,29.3 V33.5" stroke="#c2cfd8" stroke-width="0.7"/><path d="M42.5,29.3 V35.5" stroke="#c2cfd8" stroke-width="0.7"/><path d="M23.8,11 C20.5,6.5 15.5,6.5 15.5,11 C15.5,15.5 20.5,15.5 23.8,11 C27,6.5 32,6.5 32,11 C32,15.5 27,15.5 23.8,11 Z" fill="none" stroke="#17598e" stroke-width="3.2"/></svg>
<div class="p" style="left:10.5px;top:489.3px;width:389px;height:89.5px;border-radius:10px;border-width:2px"></div>
<div class="b" style="left:16.3px;top:515.4px;width:57.4px;height:57.6px;border-radius:6px;border-width:2px;"></div>
<div class="b" style="left:136.7px;top:515.4px;width:57.4px;height:57.6px;border-radius:6px;border-width:2px;"></div>
<div class="b" style="left:211.5px;top:515.4px;width:57.4px;height:57.6px;border-radius:6px;border-width:2px;"></div>
<div class="b" style="left:331.3px;top:515.4px;width:57.4px;height:57.6px;border-radius:6px;border-width:2px;"></div>
<div class="p" style="left:405.2px;top:489.3px;width:399px;height:89.5px;border-radius:10px;border-width:2px"></div>
<div class="b" style="left:411.3px;top:515.4px;width:57.8px;height:57.6px;border-radius:6px;border-width:2px;"></div>
<div class="b" style="left:531.1px;top:515.4px;width:57.8px;height:57.6px;border-radius:6px;border-width:2px;"></div>
<div class="p" style="left:815.2px;top:489.3px;width:179.6px;height:89.5px;border-radius:10px;border-width:2px"></div>
<div class="b" style="left:824.6px;top:495.7px;width:76.8px;height:76.6px;border-radius:7px;border-width:2px;"></div>
<div class="b" style="left:908.7px;top:495.7px;width:76.8px;height:76.6px;border-radius:7px;border-width:2px;"></div>
<svg style="position:absolute;left:16.2px;top:515.4px;" width="58" height="57" viewBox="0 0 58 57"><polygon points="6.5,27.8 48.6,3.8 48.6,51.8" fill="#17598e" stroke="#17598e" stroke-width="2.2" stroke-linejoin="round"/></svg>
<svg style="position:absolute;left:136.4px;top:515.4px;" width="58" height="57" viewBox="0 0 58 57"><polygon points="50.5,27.8 8.6,3.8 8.6,51.8" fill="#17598e" stroke="#17598e" stroke-width="2.2" stroke-linejoin="round"/></svg>
<svg style="position:absolute;left:211.3px;top:515.4px;" width="58" height="57" viewBox="0 0 58 57"><polygon points="6.5,27.8 48.6,3.8 48.6,51.8" fill="#17598e" stroke="#17598e" stroke-width="2.2" stroke-linejoin="round"/></svg>
<svg style="position:absolute;left:331.3px;top:515.4px;" width="58" height="57" viewBox="0 0 58 57"><polygon points="50.5,27.8 8.6,3.8 8.6,51.8" fill="#17598e" stroke="#17598e" stroke-width="2.2" stroke-linejoin="round"/></svg>
<svg style="position:absolute;left:411.3px;top:515.4px;" width="58" height="57" viewBox="0 0 58 57"><polygon points="6.5,27.8 48.6,3.8 48.6,51.8" fill="#17598e" stroke="#17598e" stroke-width="2.2" stroke-linejoin="round"/></svg>
<svg style="position:absolute;left:531.1px;top:515.4px;" width="58" height="57" viewBox="0 0 58 57"><polygon points="50.5,27.8 8.6,3.8 8.6,51.8" fill="#17598e" stroke="#17598e" stroke-width="2.2" stroke-linejoin="round"/></svg>
<svg style="position:absolute;left:824.6px;top:495.7px;" width="77" height="77" viewBox="0 0 77 77"><path d="M27.6,12.7 V37.4 A12.3,2.4 0 0 0 52.2,37.4 V12.7 Z" fill="#17598e" stroke="#3f86c8" stroke-width="0.8"/><ellipse cx="39.9" cy="12.7" rx="12.3" ry="2.2" fill="#2a6aa8" stroke="#3f86c8" stroke-width="0.8"/><ellipse cx="31.6" cy="20.2" rx="1.3" ry="2.6" fill="#d5d9d3"/><ellipse cx="31.6" cy="31.8" rx="1.3" ry="2.6" fill="#d5d9d3"/><path d="M37.8,39.4 L39.1,63 L40.7,63 L42,39.4 Z" fill="#17598e"/><circle cx="39.9" cy="64.3" r="2.9" fill="#17598e"/></svg>
<svg style="position:absolute;left:908.7px;top:495.7px;" width="77" height="77" viewBox="0 0 77 77"><rect x="7.2" y="5.6" width="38.9" height="6.2" fill="#17598e"/><path d="M11.3,11.8 H42 V31 Q42,35.7 37,35.7 H16.3 Q11.3,35.7 11.3,31 Z" fill="#17598e"/><path d="M11.3,14.6 H42 M10.5,18.5 H42.8 M11.3,22.6 H42" stroke="#4f83b3" stroke-width="0.8"/><circle cx="16.5" cy="20.6" r="1" fill="#e8eef4"/><circle cx="26.6" cy="20.6" r="1" fill="#e8eef4"/><circle cx="36.7" cy="20.6" r="1" fill="#e8eef4"/><rect x="23.5" y="35.7" width="7.2" height="21.1" fill="#e4e4e4"/><path d="M23.5,42 L30.7,36.5 M23.5,48 L30.7,42.5 M23.5,54 L30.7,48.5 M24,57 L30.7,54.5" stroke="#333" stroke-width="2.2"/><path d="M35.5,37.5 H65.2 M35.5,56 H65.2 M60.1,21.5 V35 M60.1,58.5 V72" stroke="#7f9fba" stroke-width="1.2"/><path d="M57.9,33 L60.1,37 L62.3,33 Z M57.9,58.5 L60.1,54.5 L62.3,58.5 Z" fill="#7f9fba"/></svg>
<div class="p" style="left:90.4px;top:586px;width:1039.5px;height:179.8px;border-radius:10px;border-width:2px"></div>
<div class="b" style="left:101.2px;top:592.1px;width:57.7px;height:52.2px;border-radius:6px;border-width:2px;"></div>
<div class="b" style="left:101.2px;top:647.3px;width:57.7px;height:52.2px;border-radius:6px;border-width:2px;"></div>
<div class="b" style="left:101.2px;top:702.5px;width:57.7px;height:52.2px;border-radius:6px;border-width:2px;"></div>
<div class="b" style="left:741.4px;top:592.1px;width:57px;height:52.4px;border-radius:6px;border-width:2px;"></div>
<div class="b" style="left:801.2px;top:592.1px;width:57px;height:52.4px;border-radius:6px;border-width:2px;"></div>
<div class="b" style="left:741.4px;top:647.2px;width:57px;height:52.4px;border-radius:6px;border-width:2px;"></div>
<div class="b" style="left:801.2px;top:647.2px;width:57px;height:52.4px;border-radius:6px;border-width:2px;"></div>
<div class="p" style="left:880.6px;top:596.4px;width:239px;height:159.3px;border-radius:10px;border-width:2px"></div>
<div class="p" style="left:1145.3px;top:586px;width:219.2px;height:179.8px;border-radius:10px;border-width:2px"></div>
<div class="b" style="left:1156.4px;top:597.3px;width:62.1px;height:62px;border-radius:6px;border-width:2px;"></div>
<div class="b" style="left:1223.5px;top:597.3px;width:62.1px;height:62px;border-radius:6px;border-width:2px;"></div>
<div class="b" style="left:1290.8px;top:597.3px;width:62.1px;height:62px;border-radius:6px;border-width:2px;"></div>
<div class="b" style="left:1157.1px;top:663.4px;width:95.1px;height:95.4px;border-radius:8px;border-width:2px;"></div>
<div class="b" style="left:1257px;top:663.4px;width:95.6px;height:95.4px;border-radius:8px;border-width:2px;"></div>
<div style="position:absolute;left:82.3px;top:639.8px;width:7.3px;height:39.40000000000009px;background:#a2a2a2"></div>
<div style="position:absolute;left:82.3px;top:681.9px;width:7.3px;height:39.39999999999998px;background:#a2a2a2"></div>
<div style="position:absolute;left:82.3px;top:723.9px;width:7.3px;height:39.39999999999998px;background:#a2a2a2"></div>
<svg style="position:absolute;left:101.2px;top:592.1px;" width="58" height="52" viewBox="0 0 58 52"><path d="M8.3,3 V49" stroke="#aab2b2" stroke-width="0.8" stroke-dasharray="1.2 1.6"/><path d="M18.7,3 V49" stroke="#aab2b2" stroke-width="0.8" stroke-dasharray="1.2 1.6"/><path d="M29,3 V49" stroke="#aab2b2" stroke-width="0.8" stroke-dasharray="1.2 1.6"/><path d="M39.3,3 V49" stroke="#aab2b2" stroke-width="0.8" stroke-dasharray="1.2 1.6"/><path d="M49.5,3 V49" stroke="#aab2b2" stroke-width="0.8" stroke-dasharray="1.2 1.6"/><path d="M3,6.2 H54" stroke="#aab2b2" stroke-width="0.8" stroke-dasharray="1.2 1.6"/><path d="M3,16.2 H54" stroke="#aab2b2" stroke-width="0.8" stroke-dasharray="1.2 1.6"/><path d="M3,25.8 H54" stroke="#aab2b2" stroke-width="0.8" stroke-dasharray="1.2 1.6"/><path d="M3,35.4 H54" stroke="#aab2b2" stroke-width="0.8" stroke-dasharray="1.2 1.6"/><path d="M3,45.1 H54" stroke="#aab2b2" stroke-width="0.8" stroke-dasharray="1.2 1.6"/><rect x="8.5" y="19.1" width="8.4" height="6.7" fill="#17598e"/><rect x="18.8" y="19.1" width="8.4" height="6.7" fill="#17598e"/><rect x="29.1" y="19.1" width="8.4" height="6.7" fill="#17598e"/><rect x="8.5" y="28.900000000000002" width="8.4" height="6.7" fill="#17598e"/><rect x="18.8" y="28.900000000000002" width="8.4" height="6.7" fill="#17598e"/><rect x="29.1" y="28.900000000000002" width="8.4" height="6.7" fill="#17598e"/><rect x="8.5" y="38.7" width="8.4" height="6.7" fill="#17598e"/><rect x="18.8" y="38.7" width="8.4" height="6.7" fill="#17598e"/><rect x="29.1" y="38.7" width="8.4" height="6.7" fill="#17598e"/></svg>
<svg style="position:absolute;left:101.2px;top:647.3px;" width="58" height="52" viewBox="0 0 58 52"><polygon points="3.2,40.1 52.6,22.9 54.8,30.8 5.4,48.7" fill="#9ab0c0"/><path d="M5.0,40.3 L5.6,44.0" stroke="#c4d0d8" stroke-width="0.6"/><path d="M8.1,39.2 L8.6,41.4" stroke="#c4d0d8" stroke-width="0.6"/><path d="M11.1,38.2 L11.7,40.4" stroke="#c4d0d8" stroke-width="0.6"/><path d="M14.1,37.1 L14.7,39.3" stroke="#c4d0d8" stroke-width="0.6"/><path d="M17.2,36.1 L17.8,38.3" stroke="#c4d0d8" stroke-width="0.6"/><path d="M20.2,35.0 L20.9,38.7" stroke="#c4d0d8" stroke-width="0.6"/><path d="M23.3,33.9 L23.9,36.1" stroke="#c4d0d8" stroke-width="0.6"/><path d="M26.3,32.9 L26.9,35.1" stroke="#c4d0d8" stroke-width="0.6"/><path d="M29.4,31.8 L30.0,34.0" stroke="#c4d0d8" stroke-width="0.6"/><path d="M32.5,30.8 L33.0,33.0" stroke="#c4d0d8" stroke-width="0.6"/><path d="M35.5,29.7 L36.1,33.4" stroke="#c4d0d8" stroke-width="0.6"/><path d="M38.5,28.6 L39.1,30.8" stroke="#c4d0d8" stroke-width="0.6"/><path d="M41.6,27.6 L42.2,29.8" stroke="#c4d0d8" stroke-width="0.6"/><path d="M44.6,26.5 L45.2,28.7" stroke="#c4d0d8" stroke-width="0.6"/><path d="M47.7,25.5 L48.3,27.7" stroke="#c4d0d8" stroke-width="0.6"/><path d="M50.8,24.4 L51.4,28.1" stroke="#c4d0d8" stroke-width="0.6"/><polygon points="10.4,12.9 26.9,7.1 32.6,22.2 16.1,27.9" fill="#7a9cb8" stroke="#17598e" stroke-width="1.6" stroke-linejoin="round"/><path d="M14,8 Q7,10 7.5,17" fill="none" stroke="#17598e" stroke-width="1.8"/><path d="M5.3,15.5 L7.8,20.5 L10.5,15.8 Z" fill="#17598e"/><path d="M30,27.5 Q36,26 35.5,19" fill="none" stroke="#17598e" stroke-width="1.8"/><path d="M32.8,20.5 L35.8,16 L38.3,20.8 Z" fill="#17598e"/></svg>
<svg style="position:absolute;left:101.2px;top:702.5px;" width="58" height="52" viewBox="0 0 58 52"><rect x="24.6" y="3.9" width="29.1" height="3.8" fill="#17598e"/><path d="M27.9,7.7 H51.5 V20.5 Q51.5,24.2 47.5,24.2 H31.9 Q27.9,24.2 27.9,20.5 Z" fill="#17598e"/><path d="M27.9,10 H51.5 M27.5,12.5 H52 M27.9,14.8 H51.5" stroke="#4f83b3" stroke-width="0.6"/><circle cx="32.5" cy="13.6" r="0.7" fill="#e8eef4"/><circle cx="39.7" cy="13.6" r="0.7" fill="#e8eef4"/><circle cx="46.9" cy="13.6" r="0.7" fill="#e8eef4"/><rect x="37.2" y="24.2" width="4.6" height="11" fill="#e0e0e0"/><path d="M37.2,29 L41.8,25.5 M37.2,33 L41.8,29.5 M37.5,35.5 L41.8,33" stroke="#444" stroke-width="1.4"/><text x="2.6" y="30.8" font-family="Liberation Sans" font-weight="bold" font-size="12.5" fill="#17598e" textLength="26.4" lengthAdjust="spacingAndGlyphs">Run</text><text x="2.6" y="40.2" font-family="Liberation Sans" font-weight="bold" font-size="12.5" fill="#17598e" textLength="33" lengthAdjust="spacingAndGlyphs">from</text><text x="2.6" y="50.1" font-family="Liberation Sans" font-weight="bold" font-size="12.5" fill="#17598e" textLength="32.6" lengthAdjust="spacingAndGlyphs">Here</text></svg>
<div style="position:absolute;left:170.1px;top:596.2px;width:559.5px;height:159.1px;box-sizing:border-box;border:1.3px solid #111;border-right-color:#333;border-bottom-color:#333;background:#d5d9d3"></div>
<div style="position:absolute;left:171.4px;top:597px;width:544px;height:19.8px;background:#979900"></div>
<div style="position:absolute;left:715.4px;top:597.4px;width:13px;height:143.5px;background:#d5d9d3"></div>
<div style="position:absolute;left:715.4px;top:597.4px;width:13px;height:12.6px;box-sizing:border-box;background:#d5d9d3;border-style:solid;border-width:1px 1.5px 1.5px 1px;border-color:#fff #777 #777 #fff"></div>
<div style="position:absolute;left:715.4px;top:611px;width:13px;height:25px;box-sizing:border-box;background:#d5d9d3;border-style:solid;border-width:1px 1.5px 1.5px 1px;border-color:#fff #777 #777 #fff"></div>
<div style="position:absolute;left:715.4px;top:727.6px;width:13px;height:12.6px;box-sizing:border-box;background:#d5d9d3;border-style:solid;border-width:1px 1.5px 1.5px 1px;border-color:#fff #777 #777 #fff"></div>
<div style="position:absolute;left:171.4px;top:741.1px;width:13.5px;height:13.5px;box-sizing:border-box;background:#d5d9d3;border-style:solid;border-width:1px 1.5px 1.5px 1px;border-color:#fff #777 #777 #fff"></div>
<div style="position:absolute;left:185px;top:741.1px;width:483.3px;height:13.5px;box-sizing:border-box;background:#d5d9d3;border-style:solid;border-width:1px 1.5px 1.5px 1px;border-color:#fff #777 #777 #fff"></div>
<div style="position:absolute;left:701.4px;top:741.1px;width:13.5px;height:13.5px;box-sizing:border-box;background:#d5d9d3;border-style:solid;border-width:1px 1.5px 1.5px 1px;border-color:#fff #777 #777 #fff"></div>
<svg style="position:absolute;left:715.4px;top:597.4px;" width="13" height="13" viewBox="0 0 13 13"><path d="M3.5,8 L6.5,4.5 L9.5,8 Z" fill="#222"/></svg>
<svg style="position:absolute;left:715.4px;top:727.6px;" width="13" height="13" viewBox="0 0 13 13"><path d="M3.5,5 L6.5,8.5 L9.5,5 Z" fill="#222"/></svg>
<svg style="position:absolute;left:171.4px;top:741.1px;" width="13" height="13" viewBox="0 0 13 13"><path d="M8,3.5 L4.5,6.7 L8,9.9 Z" fill="#222"/></svg>
<svg style="position:absolute;left:701.4px;top:741.1px;" width="13" height="13" viewBox="0 0 13 13"><path d="M5,3.5 L8.5,6.7 L5,9.9 Z" fill="#222"/></svg>
<svg style="position:absolute;left:741.4px;top:592.1px;" width="58" height="53" viewBox="0 0 58 53"><polygon points="28.4,13 42.1,34.3 13.7,34.3" fill="#17598e"/><polygon points="28.4,26 42.1,48.5 13.7,48.5" fill="#17598e"/><path d="M13.7,48.5 L28.4,26 L42.1,48.5" fill="none" stroke="#6d9bc6" stroke-width="1"/></svg>
<svg style="position:absolute;left:801.2px;top:592.1px;" width="58" height="53" viewBox="0 0 58 53"><polygon points="28.4,13 42.1,34.3 13.7,34.3" fill="#17598e"/><polygon points="28.4,26 42.1,48.5 13.7,48.5" fill="#17598e"/><path d="M13.7,48.5 L28.4,26 L42.1,48.5" fill="none" stroke="#6d9bc6" stroke-width="1"/><text x="53.1" y="16.6" text-anchor="end" font-family="Liberation Sans" font-weight="bold" font-size="16.5" fill="#17598e" textLength="22.5" lengthAdjust="spacingAndGlyphs">10</text></svg>
<svg style="position:absolute;left:741.4px;top:647.2px;" width="58" height="53" viewBox="0 0 58 53"><polygon points="28.4,39.5 42.1,17 13.7,17" fill="#17598e"/><polygon points="28.4,26.5 42.1,4 13.7,4" fill="#17598e"/><path d="M13.7,4 L28.4,26.5 L42.1,4" fill="none" stroke="#6d9bc6" stroke-width="1"/></svg>
<svg style="position:absolute;left:801.2px;top:647.2px;" width="58" height="53" viewBox="0 0 58 53"><polygon points="28.4,39.5 42.1,17 13.7,17" fill="#17598e"/><polygon points="28.4,26.5 42.1,4 13.7,4" fill="#17598e"/><path d="M13.7,4 L28.4,26.5 L42.1,4" fill="none" stroke="#6d9bc6" stroke-width="1"/><text x="53.1" y="49" text-anchor="end" font-family="Liberation Sans" font-weight="bold" font-size="16.5" fill="#17598e" textLength="22.5" lengthAdjust="spacingAndGlyphs">10</text></svg>
<div style="position:absolute;left:890.4px;top:661.4px;width:219.1px;height:19.4px;box-sizing:border-box;background:#fff;border:1px solid #b8b8b8;border-radius:2px"></div>
<svg style="position:absolute;left:1156.4px;top:597.3px;" width="62" height="61" viewBox="0 0 62 61"><rect x="5.5" y="5.7" width="8.6" height="49.6" rx="1.6" fill="#17598e"/><polygon points="14.2,31.2 55,7.4 55,54.8" fill="#17598e" stroke="#17598e" stroke-width="2" stroke-linejoin="round"/></svg>
<svg style="position:absolute;left:1223.5px;top:597.3px;" width="62" height="61" viewBox="0 0 62 61"><polygon points="8.7,22.1 31.5,7.6 31.5,36.6" fill="#17598e"/><path d="M30,22.5 H36 A14.75,14.75 0 0 1 36,52 H14.5" fill="none" stroke="#17598e" stroke-width="8.4"/></svg>
<svg style="position:absolute;left:1290.8px;top:597.3px;" width="62" height="61" viewBox="0 0 62 61"><rect x="4.1" y="7.6" width="8" height="48" rx="1.6" fill="#17598e"/><polygon points="17.7,7.8 58.3,31.2 17.7,54.6" fill="#17598e" stroke="#17598e" stroke-width="2" stroke-linejoin="round"/></svg>
<svg style="position:absolute;left:1157.1px;top:663.4px;" width="95" height="95" viewBox="0 0 95 95"><defs><linearGradient id="sg" x1="0" y1="0" x2="0" y2="1"><stop offset="0" stop-color="#720000"/><stop offset="0.5" stop-color="#b00808"/><stop offset="1" stop-color="#ee1010"/></linearGradient><linearGradient id="sb" x1="0" y1="0" x2="1" y2="1"><stop offset="0" stop-color="#ff1a1a"/><stop offset="1" stop-color="#7a0000"/></linearGradient><linearGradient id="sh" x1="0" y1="0" x2="0" y2="1"><stop offset="0" stop-color="#fff" stop-opacity="0"/><stop offset="1" stop-color="#fff" stop-opacity="0.28"/></linearGradient></defs><polygon points="31.23,7.30 64.37,7.30 87.80,30.73 87.80,63.87 64.37,87.30 31.23,87.30 7.80,63.87 7.80,30.73" fill="url(#sb)"/><polygon points="32.35,10.00 63.25,10.00 85.10,31.85 85.10,62.75 63.25,84.60 32.35,84.60 10.50,62.75 10.50,31.85" fill="#fff"/><polygon points="32.97,11.50 62.63,11.50 83.60,32.47 83.60,62.13 62.63,83.10 32.97,83.10 12.00,62.13 12.00,32.47" fill="url(#sg)"/><path d="M13,30 L30,12.5 L65.5,12.5 L83,30 L83,40 Q48,53 13,40 Z" fill="url(#sh)"/><text x="47.8" y="57.6" text-anchor="middle" font-family="Liberation Sans" font-weight="bold" font-size="28.5" fill="#fff" textLength="62" lengthAdjust="spacingAndGlyphs">STOP</text></svg>
<svg style="position:absolute;left:1257px;top:663.4px;" width="95" height="95" viewBox="0 0 95 95"><polygon points="12.5,7.5 81.5,45.7 12.5,85.3" fill="#17598e" stroke="#17598e" stroke-width="3.5" stroke-linejoin="round"/></svg>
<svg style="position:absolute;left:0;top:0" width="1380" height="782" font-family="Liberation Sans"><text x="91.1" y="475.2" font-size="12.6" fill="#e6e6d8" font-weight="bold" text-anchor="start" textLength="171" lengthAdjust="spacingAndGlyphs" >G0&#160; G17 G91 G21 G40 G43</text><text x="1215.1" y="48.1" font-size="18" fill="#fa5c00" font-weight="bold" text-anchor="start" textLength="36.8" lengthAdjust="spacingAndGlyphs" >G54:</text><text x="1358.2" y="43.1" font-size="21" fill="#b80000" font-weight="bold" text-anchor="end" letter-spacing="-0.1" >-0.654</text><text x="1358.6" y="71.9" font-size="16.5" fill="#98a000" font-weight="bold" text-anchor="end" letter-spacing="-0.15" >2938.074</text><text x="1215.1" y="111.4" font-size="18" fill="#fa5c00" font-weight="bold" text-anchor="start" textLength="36.8" lengthAdjust="spacingAndGlyphs" >G54:</text><text x="1358.2" y="103.0" font-size="21" fill="#b80000" font-weight="bold" text-anchor="end" letter-spacing="-0.1" >-32.701</text><text x="1358.6" y="131.3" font-size="16.5" fill="#98a000" font-weight="bold" text-anchor="end" letter-spacing="-0.15" >1356.297</text><text x="1215.1" y="175.9" font-size="18" fill="#fa5c00" font-weight="bold" text-anchor="start" textLength="36.8" lengthAdjust="spacingAndGlyphs" >G54:</text><text x="1358.2" y="162.9" font-size="21" fill="#b80000" font-weight="bold" text-anchor="end" letter-spacing="-0.1" >4.502</text><text x="1358.6" y="190.7" font-size="16.5" fill="#98a000" font-weight="bold" text-anchor="end" letter-spacing="-0.15" >-451.310</text><text x="1358.2" y="222.79999999999998" font-size="21" fill="#b80000" font-weight="bold" text-anchor="end" letter-spacing="-0.1" >0.00</text><text x="1358.6" y="250.1" font-size="16.5" fill="#98a000" font-weight="bold" text-anchor="end" letter-spacing="-0.15" >-229.18</text><text x="1119.8" y="411.4" font-size="18" fill="#17598e" text-anchor="middle" >0</text><text x="1259.8" y="393.5" font-size="18" fill="#17598e" text-anchor="middle" >0</text><text x="1119.7" y="543.6" font-size="17.5" fill="#17598e" text-anchor="middle" >0</text><text x="44.4" y="508.8" font-size="13" fill="#1a1a1a" text-anchor="start" textLength="119.8" lengthAdjust="spacingAndGlyphs" >Jog over speed,[%]</text><text x="250.4" y="508.8" font-size="13" fill="#1a1a1a" text-anchor="start" textLength="98.7" lengthAdjust="spacingAndGlyphs" >Over Speed,[%]</text><text x="91.9" y="550.1" font-size="16.4" fill="#17598e" font-weight="bold" text-anchor="start" textLength="25.5" lengthAdjust="spacingAndGlyphs" >100</text><text x="286.7" y="550.1" font-size="16.4" fill="#17598e" font-weight="bold" text-anchor="start" textLength="25.8" lengthAdjust="spacingAndGlyphs" >100</text><text x="426.1" y="508.9" font-size="13.5" fill="#1a1a1a" text-anchor="start" textLength="147.8" lengthAdjust="spacingAndGlyphs" >Spindle Speed, [rpm]</text><text x="478.3" y="550.0" font-size="16.4" fill="#17598e" font-weight="bold" text-anchor="start" textLength="43.4" lengthAdjust="spacingAndGlyphs" >15600</text><text x="724.7" y="512.1" font-size="13.5" fill="#1a1a1a" text-anchor="end" textLength="117.2" lengthAdjust="spacingAndGlyphs" >Tool Length, [mm]</text><text x="724.7" y="536.0" font-size="13.5" fill="#1a1a1a" text-anchor="end" textLength="28.2" lengthAdjust="spacingAndGlyphs" >Tool</text><text x="724.7" y="561.2" font-size="13.5" fill="#1a1a1a" text-anchor="end" textLength="110.7" lengthAdjust="spacingAndGlyphs" >Z correction, mm</text><text x="747.5" y="512.1" font-size="12.8" fill="#17598e" font-weight="bold" text-anchor="start" textLength="35.5" lengthAdjust="spacingAndGlyphs" >0.000</text><text x="749.0" y="536.9" font-size="16" fill="#17598e" font-weight="bold" text-anchor="start" textLength="20.9" lengthAdjust="spacingAndGlyphs" >T7</text><text x="747.5" y="561.5" font-size="12.8" fill="#17598e" font-weight="bold" text-anchor="start" textLength="35.5" lengthAdjust="spacingAndGlyphs" >0.000</text><text x="11.8" y="666.7" font-size="20.5" fill="#17598e" font-weight="bold" text-anchor="start" textLength="66.9" lengthAdjust="spacingAndGlyphs" >G-code</text><text x="35.4" y="708.7" font-size="20.5" fill="#17598e" font-weight="bold" text-anchor="start" textLength="34.9" lengthAdjust="spacingAndGlyphs" >Mill</text><text x="36.8" y="749.9" font-size="20.5" fill="#17598e" font-weight="bold" text-anchor="start" textLength="35.8" lengthAdjust="spacingAndGlyphs" >Log</text><text x="174.2" y="611.7" font-size="13.2" fill="#fff" font-weight="bold" text-anchor="start" textLength="111.6" lengthAdjust="spacingAndGlyphs" >1: G17 G90 G91.1</text><text x="174.2" y="631.7" font-size="13.2" fill="#111" font-weight="bold" text-anchor="start" textLength="32.8" lengthAdjust="spacingAndGlyphs" >2: G0</text><text x="174.2" y="651.7" font-size="13.2" fill="#111" font-weight="bold" text-anchor="start" textLength="88.4" lengthAdjust="spacingAndGlyphs" >3: M3 P15639</text><text x="174.2" y="671.7" font-size="13.2" fill="#111" font-weight="bold" text-anchor="start" textLength="296.3" lengthAdjust="spacingAndGlyphs" >4: G90G0 X6.318200 Y-38.277900 Z30.000000</text><text x="174.2" y="691.7" font-size="13.2" fill="#111" font-weight="bold" text-anchor="start" textLength="130.9" lengthAdjust="spacingAndGlyphs" >5: G90G0 Z6.000000</text><text x="174.2" y="711.7" font-size="13.2" fill="#111" font-weight="bold" text-anchor="start" textLength="130.9" lengthAdjust="spacingAndGlyphs" >6: G90G0 Z2.000000</text><text x="174.2" y="731.7" font-size="13.2" fill="#111" font-weight="bold" text-anchor="start" textLength="164.4" lengthAdjust="spacingAndGlyphs" >7: G1 Z-5.420000 F1500.0</text><text x="890.8" y="621.2" font-size="14" fill="#222" text-anchor="start" textLength="68.6" lengthAdjust="spacingAndGlyphs" >Total Lines</text><text x="1109" y="622.9" font-size="18" fill="#17598e" font-weight="bold" text-anchor="end" textLength="39.5" lengthAdjust="spacingAndGlyphs" >5033</text><text x="890.8" y="651.6" font-size="14" fill="#222" text-anchor="start" textLength="77.6" lengthAdjust="spacingAndGlyphs" >Current Line</text><text x="1109" y="652.9" font-size="18" fill="#17598e" font-weight="bold" text-anchor="end" >9</text><text x="999.9" y="675.5" font-size="12.5" fill="#222" text-anchor="middle" >0%</text><text x="890.8" y="711.8" font-size="14" fill="#222" text-anchor="start" textLength="85.7" lengthAdjust="spacingAndGlyphs" >Time Elapsed</text><text x="1109" y="712.8" font-size="18" fill="#17598e" font-weight="bold" text-anchor="end" textLength="70.5" lengthAdjust="spacingAndGlyphs" >00:00:00</text><text x="890.8" y="741.2" font-size="14" fill="#222" text-anchor="start" textLength="100.1" lengthAdjust="spacingAndGlyphs" >Time Estimated</text><text x="1109" y="742.2" font-size="18" fill="#17598e" font-weight="bold" text-anchor="end" textLength="70.5" lengthAdjust="spacingAndGlyphs" >00:17:48</text></svg>
</body></html>
